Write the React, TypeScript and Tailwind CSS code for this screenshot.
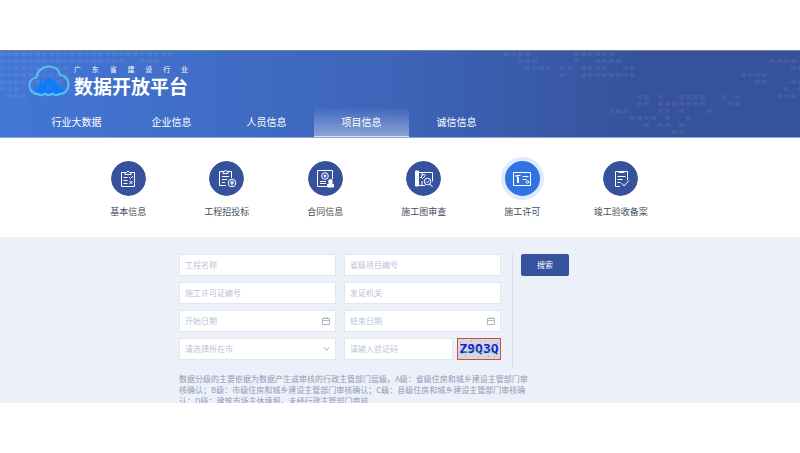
import type { ReactNode } from "react";

const navItems = ["行业大数据", "企业信息", "人员信息", "项目信息", "诚信信息"];

// Runs of squares in the banner pattern: x, y, number of squares
const dotRuns: [number, number, number][] = [
  [0, 1, 25], [0, 8, 18], [140, 8, 3], [0, 15, 10], [0, 22, 10], [0, 29, 9], [0, 36, 3], [7, 43, 3],
  [504, 1, 4], [518, 8, 3], [525, 15, 4], [560, 15, 2], [560, 22, 1],
  [574, 1, 6], [574, 8, 1], [595, 8, 4], [581, 15, 4], [623, 15, 2], [581, 22, 8],
  [770, 8, 4], [791, 15, 2], [741, 22, 4], [755, 29, 2], [791, 29, 2], [784, 36, 1], [798, 36, 1], [777, 43, 3],
  [637, 44, 2], [658, 44, 1], [679, 44, 4], [721, 44, 1], [735, 44, 1],
  [637, 51, 2], [658, 51, 7], [728, 51, 2],
  [609, 58, 3], [658, 58, 2], [679, 58, 1], [707, 58, 1],
  [630, 65, 4], [665, 65, 1], [686, 65, 1],
  [644, 72, 1], [658, 72, 2], [679, 72, 1], [672, 79, 2],
];

function BannerPattern() {
  return (
    <svg className="absolute inset-0 h-full w-full" aria-hidden="true">
      {dotRuns.flatMap(([x, y, n]) =>
        Array.from({ length: n }, (_, i) => (
          <rect key={`${x}-${y}-${i}`} x={x + i * 7} y={y} width="5" height="4" fill="#ffffff" fillOpacity="0.06" />
        ))
      )}
    </svg>
  );
}

function CloudLogo() {
  return (
    <svg width="42" height="32" viewBox="0 0 42 32" fill="none" aria-hidden="true">
      <path d="M7 25L12 20V15h2v3l7-6 15 13-3 3H9z" fill="#0a7cff" />
      <path d="M18 19h2v2h-2zm3 0h2v2h-2zm-3 3h2v2h-2zm3 0h2v2h-2z" fill="#3f74cf" />
      <path
        d="M10 29C5 29 1.500 25.500 1.500 20.500C1.500 16 4.500 13 8.500 12.500C9 6 14 1.500 21 1.500C27 1.500 31 5 32 10C37 10.500 40.500 14.500 40.500 19.500C40.500 25 37 29 31.500 29C29 30.500 26.500 30.500 24.500 28.500C22 30.500 19 30.500 17 28.500C15 30.500 12 30.500 10 29Z"
        stroke="#55bdf5"
        strokeWidth="2.200"
        strokeLinejoin="round"
      />
    </svg>
  );
}

function Glyph({ children }: { children: ReactNode }) {
  return (
    <svg width="20" height="20" viewBox="0 0 20 20" fill="none" stroke="#ffffff" strokeWidth="1" aria-hidden="true">
      {children}
    </svg>
  );
}

const categories: { label: string; icon: ReactNode }[] = [
  {
    label: "基本信息",
    icon: (
      <Glyph>
        <path d="M7 3.500H3.500v14h13v-14H13M7 5.500V3.500h1.500L10 2l1.500 1.500H13V5.500z" />
        <path d="M5.500 8.500h4M5.500 11.500h4M5.500 14.500h4M11 8l1.500 1.500L15 7M11.500 12l3 3M14.500 12l-3 3" />
      </Glyph>
    ),
  },
  {
    label: "工程招投标",
    icon: (
      <Glyph>
        <path d="M6 2.500H2.500v14H9M11 2.500h3.500V9M6 4.500V2.500h1.500L8.500 1l1 1.500H11v2zM5 7.500h7M5 10.500h5M5 13.500h3" />
        <circle cx="15" cy="14" r="3.800" />
        <path d="M15 11.500v5M13 14h4M13.500 12.500L15 14l1.500-1.500" />
      </Glyph>
    ),
  },
  {
    label: "合同信息",
    icon: (
      <Glyph>
        <path d="M12 17.500H2.500v-16h15V10" />
        <circle cx="10" cy="7" r="3.300" />
        <circle cx="10" cy="7" r="1" fill="#ffffff" />
        <path d="M5 12.500h6M5 14.500h6" />
        <path d="M15.500 10.500a1.600 1.600 0 0 1 1.500 2.500v2.500h1.500V18h-6v-2.500H14V13a1.600 1.600 0 0 1 1.500-2.500z" fill="#ffffff" />
      </Glyph>
    ),
  },
  {
    label: "施工图审查",
    icon: (
      <Glyph>
        <path d="M1.500 2h3v15h-3z" fill="#ffffff" />
        <path d="M4.500 3.500h14v9M4.500 16.500H11M8 4v3l-2 2M8 16v-4" />
        <path d="M7 8l3-3 1.500 1.500-3 3z" />
        <circle cx="13.500" cy="12.500" r="3.300" />
        <path d="M12 12.500l1.200 1.200 2-2.200M16 15l2.500 3" />
      </Glyph>
    ),
  },
  {
    label: "施工许可",
    icon: (
      <Glyph>
        <path d="M1.500 3.500h17v13h-17z" />
        <path d="M4 6.500h4.500M5.500 6v8M6.500 8v6M4 8v-2M10.500 7.500h6M10.500 10.500h4" />
        <circle cx="15.500" cy="13" r="1.300" />
      </Glyph>
    ),
  },
  {
    label: "竣工验收备案",
    icon: (
      <Glyph>
        <path d="M9 17.500H4.500v-15H16.500V11M7.500 3.500h6" />
        <path d="M6.500 7.500h8M6.500 10.500h5M6.500 13.500h3M10.500 14l2.500 3 5-5.500" />
      </Glyph>
    ),
  },
];

function CalendarIcon() {
  return (
    <svg width="8" height="8" viewBox="0 0 8 8" fill="none" stroke="#b3b6bd" aria-hidden="true">
      <path d="M.5 1.500h7v6h-7zM.5 3.500h7M2.500 0v2M5.500 0v2" />
    </svg>
  );
}

function ChevronIcon() {
  return (
    <svg width="7" height="8" viewBox="0 0 7 8" fill="none" stroke="#b3b6bd" aria-hidden="true">
      <path d="M1 2l2.500 3.500L6 2" />
    </svg>
  );
}

function Field({ label, icon }: { label: string; icon?: ReactNode }) {
  return (
    <label className="flex h-[22px] min-w-0 flex-1 items-center rounded-[1px] border border-[#e3e6ec] bg-white px-[5px]">
      <input
        type="text"
        aria-label={label}
        placeholder={label}
        className="min-w-0 flex-1 bg-transparent text-[8px] leading-[20px] text-[#606a8c] outline-none placeholder:text-[#bcc2d8]"
      />
      {icon}
    </label>
  );
}

export default function App() {
  return (
    <div className="bg-white pt-[50px] font-['Noto_Sans_CJK_SC',sans-serif]" lang="zh-CN">
      <header className="relative border-t border-b border-t-[#70868a] border-b-[#92a5d6] bg-gradient-to-r from-[#4377d6] via-[#3d64b8] to-[#36529c] to-80% text-white">
        <BannerPattern />
        <div className="relative">
          <div className="flex items-start gap-1 pt-[14px] pl-[28px]">
            <CloudLogo />
            <div>
              <p className="flex w-[114px] justify-between text-[7px] leading-[9px]">
                {Array.from("广东省建设行业").map((c) => (
                  <span key={c}>{c}</span>
                ))}
              </p>
              <h1 className="text-[19px] leading-[24px] font-bold whitespace-nowrap">数据开放平台</h1>
            </div>
          </div>
          <nav className="mt-[9px] flex pl-[29px]">
            {navItems.map((item) => (
              <a
                key={item}
                href="#"
                aria-current={item === "项目信息" ? "page" : undefined}
                className={
                  item === "项目信息"
                    ? "h-[30px] w-[95px] border-b border-[#d5def2] bg-gradient-to-b from-white/0 to-white/40 text-center text-[10px] leading-[29px]"
                    : "h-[30px] w-[95px] text-center text-[10px] leading-[29px]"
                }
              >
                {item}
              </a>
            ))}
          </nav>
        </div>
      </header>

      <nav className="pt-[19px] pb-[18px] pl-[79px]">
        <ul className="grid max-w-[591px] grid-cols-6">
          {categories.map(({ label, icon }) => (
            <li key={label}>
              <a href="#" className="flex flex-col items-center">
                <span
                  className={
                    label === "施工许可"
                      ? "flex size-[43px] items-center justify-center rounded-full border-4 border-[#e0eafc] bg-[#3273e2]"
                      : "flex size-[43px] items-center justify-center rounded-full border-4 border-white bg-[#36529c] bg-clip-padding"
                  }
                >
                  {icon}
                </span>
                <span className="mt-[5px] text-[9px] leading-[14px] text-[#444b5c]">{label}</span>
              </a>
            </li>
          ))}
        </ul>
      </nav>

      <main className="h-[166px] overflow-hidden bg-[#ecf1f9] pt-[17px] pl-[179px]">
        <form className="flex items-start">
          <div className="grid w-[322px] grid-cols-2 gap-x-2 gap-y-[6px]">
            <Field label="工程名称" />
            <Field label="省级项目编号" />
            <Field label="施工许可证编号" />
            <Field label="发证机关" />
            <Field label="开始日期" icon={<CalendarIcon />} />
            <Field label="结束日期" icon={<CalendarIcon />} />
            <label className="flex h-[22px] items-center rounded-[1px] border border-[#e3e6ec] bg-white px-[5px]">
              <select
                aria-label="请选择所在市"
                className="min-w-0 flex-1 appearance-none bg-transparent text-[8px] leading-[20px] text-[#bcc2d8] outline-none"
              >
                <option>请选择所在市</option>
              </select>
              <ChevronIcon />
            </label>
            <div className="flex gap-1">
              <Field label="请输入验证码" />
              <button
                type="button"
                className="relative h-[22px] w-[44px] border border-[#cf4a4a] bg-[#d5d8da] text-center font-['DejaVu_Sans_Mono',monospace] text-[13px] leading-[20px] font-bold text-[#1414e0]"
              >
                Z9Q3Q
                <svg className="absolute inset-0" width="42" height="20" fill="none" aria-hidden="true">
                  <path d="M3 15L20 9l18 6M8 5l14 9 16-8" stroke="#62d080" strokeWidth=".7" strokeOpacity=".8" />
                  <path
                    d="M2 3h1M7 17h1M13 2h1M20 18h1M27 2h1M36 18h1M39 4h1M4 10h1M30 17h1M18 5h1"
                    stroke="#c58f55"
                  />
                </svg>
              </button>
            </div>
          </div>
          <div className="ml-[11px] h-[113px] border-l border-[#d5dcec]" />
          <button type="submit" className="ml-2 h-[22px] w-[48px] rounded-[2px] bg-[#36529c] text-[8px] leading-[22px] text-white">
            搜索
          </button>
        </form>
        <p className="mt-[6px] w-[353px] text-[8px] leading-[11px] text-[#929bb8]">
          数据分级的主要依据为数据产生或审核的行政主管部门层级。A级：省级住房和城乡建设主管部门审核确认；B级：市级住房和城乡建设主管部门审核确认；C级：县级住房和城乡建设主管部门审核确认；D级：建筑市场主体填报，未经行政主管部门审核
        </p>
      </main>
    </div>
  );
}
